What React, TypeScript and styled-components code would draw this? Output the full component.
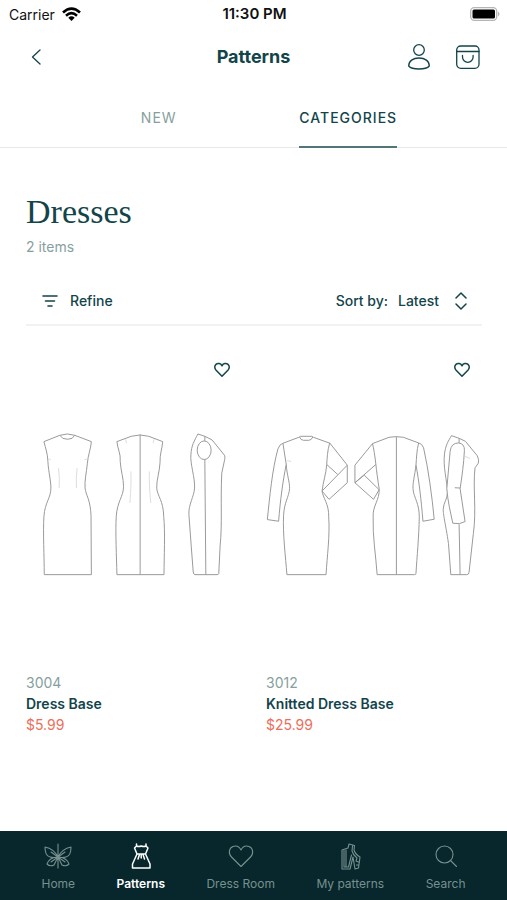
import React from "react";
import styled, { createGlobalStyle, css } from "styled-components";

const ink = "#12444a";
const muted = "#869f9e";
const coral = "#ec6e5b";

const GlobalStyle = createGlobalStyle`
  *, *::before, *::after { box-sizing: border-box; }
  body {
    margin: 0;
    background: #fff;
    color: ${ink};
    font-family: Inter, "Liberation Sans", sans-serif;
    font-size: 14px;
  }
  button, select { font: inherit; color: inherit; }
  a { color: inherit; text-decoration: none; }
  h1, h2, h3, p { margin: 0; }
`;

const Screen = styled.div`
  display: flex;
  flex-direction: column;
  min-height: 100vh;
`;

const ThreeColumns = styled.div`
  display: grid;
  grid-template-columns: 1fr auto 1fr;
  align-items: center;
`;

const StatusBar = styled(ThreeColumns)`
  height: 28px;
  padding: 0 7px 0 9px;
  color: #111;
`;

const Carrier = styled.span`
  display: flex;
  align-items: center;
  gap: 7px;
`;

const Clock = styled.time`
  font-size: 15px;
  line-height: 20px;
  font-weight: 600;
`;

const Header = styled(ThreeColumns)`
  height: 58px;
  padding: 0 26px;
`;

const HeaderTitle = styled.h2`
  font-size: 18px;
  line-height: 24px;
  font-weight: 700;
`;

const Actions = styled.div`
  display: flex;
  justify-self: end;
  gap: 23px;
`;

const IconButton = styled.button`
  display: flex;
  align-items: center;
  justify-content: center;
  justify-self: start;
  min-width: 22px;
  height: 32px;
  padding: 0;
  border: 0;
  background: none;
  cursor: pointer;
`;

const LineIcon = styled.svg<{ $weight?: number }>`
  display: block;
  flex: none;
  fill: none;
  stroke: currentColor;
  stroke-width: ${({ $weight = 1.3 }) => $weight};
  stroke-linecap: round;
  stroke-linejoin: round;
`;

const Tabs = styled.nav`
  display: grid;
  grid-template-columns: 1fr 1fr;
  justify-items: center;
  height: 62px;
  padding: 0 64px;
  border-bottom: 1px solid #e6e9e9;
`;

const Tab = styled.a<{ $active?: boolean }>`
  height: 62px;
  line-height: 63px;
  letter-spacing: 1px;
  color: ${muted};
  ${({ $active }) =>
    $active &&
    css`
      color: ${ink};
      font-weight: 500;
      border-bottom: 2px solid #517579;
    `}
`;

const Content = styled.main`
  flex: 1;
  padding: 44px 25px 40px 26px;
`;

const PageTitle = styled.h1`
  font-family: "Liberation Serif", serif;
  font-size: 34px;
  line-height: 40px;
  font-weight: 400;
`;

const Count = styled.p`
  margin-top: 5px;
  line-height: 20px;
  color: ${muted};
`;

const Toolbar = styled.div`
  display: flex;
  align-items: center;
  justify-content: space-between;
  height: 49px;
  margin-top: 20px;
  padding: 0 14px 0 16px;
  border-bottom: 2px solid #f1f3f3;
  font-weight: 500;
`;

const RefineButton = styled.button`
  display: flex;
  align-items: center;
  gap: 12px;
  padding: 0;
  border: 0;
  background: none;
  cursor: pointer;
`;

const Sort = styled.label`
  display: flex;
  align-items: center;
`;

const SortSelect = styled.select`
  appearance: none;
  margin: 0 14px 0 10px;
  padding: 0;
  border: 0;
  background: none;
`;

const Products = styled.div`
  display: grid;
  grid-template-columns: 1fr 1fr;
  gap: 24px;
  margin-top: 24px;
`;

const Card = styled.article`
  position: relative;
  line-height: 21px;
`;

const Favourite = styled(IconButton)`
  position: absolute;
  top: 4px;
  right: 4px;
  width: 32px;
`;

const Sketch = styled.svg`
  display: block;
  width: 100%;
  margin: 80px 0 93px;
  fill: none;
  stroke: #999;
  stroke-width: 3;
  stroke-linejoin: round;
`;

const Dart = styled.path`
  stroke: #ddd;
`;

const Code = styled.p`
  color: ${muted};
`;

const Name = styled.h3`
  font-size: 14px;
  font-weight: 600;
`;

const Price = styled.p`
  color: ${coral};
`;

const BottomNav = styled.nav`
  position: sticky;
  bottom: 0;
  display: flex;
  justify-content: space-evenly;
  height: 69px;
  padding-top: 12px;
  background: #07272c;
`;

const NavItem = styled.a<{ $active?: boolean }>`
  display: flex;
  flex-direction: column;
  align-items: center;
  gap: 5px;
  font-size: 12px;
  line-height: 16px;
  color: ${({ $active }) => ($active ? "#fff" : "#77908f")};
  font-weight: ${({ $active }) => ($active ? 600 : 400)};
`;

const heart = "M8 14.2 1.9 8C.3 6.3.4 3.8 2 2.4 3.8.9 6.7 1.3 8 3.8 9.3 1.3 12.2.9 14 2.4c1.6 1.4 1.7 3.9.1 5.6Z";

function FittedDress() {
  return (
    <Sketch viewBox="0 0 651 450" role="img" aria-label="Dress Base sketch">
      <g transform="translate(-18 -30)">
        <path d="M72 65 120 46Q143 38 165 46L215 65C213 88 205 105 203 130C200 160 194 185 196 205C198 225 213 242 214 290L215 466H73C73 410 69 340 72 290C75 248 93 235 93 205C93 180 86 160 84 125C83 100 77 85 72 65Z" />
        <path d="M120 46Q126 58 143 58Q160 58 165 46" />
        <Dart d="M116 145Q120 175 118 205M172 145Q168 175 170 205M84 117 93 120M203 117 194 120" />
        <path d="M292 65 335 49Q362 41 388 49L430 65C428 90 421 102 422 128C421 155 411 180 412 205C414 230 432 242 433 290C438 340 434 410 434 466H292C291 410 287 340 290 290C293 245 312 230 312 200C312 175 304 155 302 125C304 100 294 88 292 65ZM362 44V466" />
        <Dart d="M318 58 321 70M404 58 401 70M334 155Q336 190 331 250M390 155Q388 190 394 250" />
      </g>
      <g transform="translate(402 -30)">
        <path d="M116 42 137 49 159 60 196 106Q199 111 197 118L188 160C184 250 190 310 183 380L179 463Q178 466 174 466H107Q103 466 102 458L96 380 89 285C87 255 105 230 106 205C108 175 92 130 95 105C96 77 106 62 116 42Z" />
        <ellipse cx="135" cy="91" rx="21" ry="28" />
        <path d="M137 49V63M137 119 140 466" />
      </g>
    </Sketch>
  );
}

function SleevedDress() {
  return (
    <Sketch viewBox="0 0 651 450" role="img" aria-label="Knitted Dress Base sketch">
      <g transform="translate(-319 -28)">
        <path d="M370 68 418 50 423 47H457L462 50 512 68M420 49Q424 59 432 59H448Q456 59 460 49M370 68Q361 69 355 85C338 145 330 230 323 298L357 303C362 240 370 180 380 132L370 68M380 132C382 165 391 185 390 205C388 230 374 245 372 285C369 340 378 410 382 464H500" />
        <Dart d="M383 120 395 123" />
      </g>
      <g transform="translate(101 -28)">
        <path d="M91 67 144 134V187L89 237 68 212 144 134M91 67C84 90 83 115 82 132C80 160 71 185 68 212C70 232 89 250 88 290C92 345 83 410 80 464M82 132 115 162" />
        <path d="M220 69 270 50Q292 46 313 50L359 67C353 90 353 110 351 134C348 165 339 190 343 212C345 230 361 250 361 290C360 350 354 410 351 460Q351 464 347 464H234C230 405 220 350 222 290C220 255 242 240 240 205C236 180 232 150 230 130C227 105 224 85 220 69ZM292 49V464M220 69 167 134V187L223 237 240 208 195 164 167 187 230 132" />
        <path d="M359 67Q369 68 374 82C389 150 399 225 406 297L372 303C367 240 360 180 351 134" />
        <path d="M458 45 481 53 500 62 536 106Q542 118 539 128L529 142C522 200 534 270 524 340L511 457Q510 464 504 464H456L449 370C440 310 434 290 433 268C434 245 446 237 446 216C445 180 432 140 437 100C440 75 448 62 458 45Z" />
        <path fill="#fff" d="M462 309C455 275 447 245 444 205L454 92Q457 67 479 67Q498 69 497 90C495 130 490 165 484 205L499 304Q483 314 462 309Z" />
        <path d="M481 53V67M481 312 484 464M468 202 484 203" />
        <Dart d="M498 107 514 114" />
      </g>
    </Sketch>
  );
}

const products = [
  { code: "3004", name: "Dress Base", price: "$5.99", drawing: <FittedDress /> },
  { code: "3012", name: "Knitted Dress Base", price: "$25.99", drawing: <SleevedDress /> },
];

const navItems = [
  {
    label: "Home",
    icon: <path d="M14 1V25M14 14C11 8 6 5 1 4Q1 13 6 14Q10 15 14 14Q18 15 22 14Q27 13 27 4C22 5 17 8 14 14M13 14Q5 15 3 21Q6 24 10 22L14 14 18 22Q22 24 25 21Q23 15 15 14M7 9 21 19M21 9 7 19" />,
  },
  {
    label: "Patterns",
    active: true,
    icon: <path d="M9.500 1V3L7.500 5 10 11 5.500 21V25H23V21L18.500 11 21 5 19 3V1M9.500 3Q12 4 14.200 3Q17 4 19 3M10 11H18.500M12.500 11.500 11 16M14.200 12V15M16 11.500 17.500 16" />,
  },
  {
    label: "Dress Room",
    icon: <path d="M14 23.500 4.500 14C1 10.500 2 5 6 3.500C9.500 2.200 12.500 4 14 7C15.500 4 18.500 2.200 22 3.500C26 5 27 10.500 23.500 14Z" />,
  },
  {
    label: "My patterns",
    icon: <path d="M13 1 18.500 2.500 18 7Q19 11 24 14L22.500 25 19 26 17 14 14 26H6V7L12 5ZM8 7.500V24H12.500L15.500 12M10 7V24M16.500 3 16 8Q17 12 21 15L20 18 22.500 19M20.500 22H23" />,
  },
  {
    label: "Search",
    icon: (
      <>
        <circle cx="12.500" cy="11.500" r="8.500" />
        <path d="m18.500 17.500 6 6" />
      </>
    ),
  },
];

export default function App() {
  return (
    <Screen>
      <GlobalStyle />
      <StatusBar>
        <Carrier>
          Carrier
          <svg width="19" height="15" viewBox="0 0 19 15" fill="none" stroke="#000" strokeWidth="2.600" aria-hidden="true">
            <path d="M1 5.500Q9.500-2.300 18 5.500M4 8.700Q9.500 3.700 15 8.700" />
            <path d="M9.500 14 6.300 10.700Q9.500 8 12.700 10.700Z" fill="#000" stroke="none" />
          </svg>
        </Carrier>
        <Clock>11:30 PM</Clock>
        <Actions>
          <svg width="30" height="14" viewBox="0 0 30 14" role="img" aria-label="Battery full">
            <rect x=".7" y=".7" width="26" height="12.600" rx="3.500" fill="#fff" stroke="#b5b5b5" strokeWidth="1.300" />
            <rect x="2.500" y="2.500" width="22.500" height="9" rx="1.500" />
            <path d="M28 4.500Q31 7 28 9.500Z" fill="#b5b5b5" />
          </svg>
        </Actions>
      </StatusBar>

      <Header>
        <IconButton aria-label="Back">
          <LineIcon width="22" height="18" viewBox="0 0 22 18">
            <path d="m14 2-7.500 7 7.500 7" />
          </LineIcon>
        </IconButton>
        <HeaderTitle>Patterns</HeaderTitle>
        <Actions>
          <IconButton aria-label="Account">
            <LineIcon width="26" height="26" viewBox="0 0 26 26">
              <circle cx="13" cy="6" r="5.300" />
              <path d="M2.700 22C2.700 17 7 14 13 14S23.300 17 23.300 22C20 26 6 26 2.700 22Z" />
            </LineIcon>
          </IconButton>
          <IconButton aria-label="Shopping bag">
            <LineIcon width="26" height="26" viewBox="0 0 26 26">
              <rect x="1.700" y="2" width="22.300" height="22.300" rx="4" />
              <path d="M1.700 7.500H24M7.500 11.500V13a5.300 5.300 0 0 0 10.600 0V11.500" />
            </LineIcon>
          </IconButton>
        </Actions>
      </Header>

      <Tabs aria-label="Pattern views">
        <Tab href="#new">NEW</Tab>
        <Tab href="#categories" $active aria-current="page">CATEGORIES</Tab>
      </Tabs>

      <Content>
        <PageTitle>Dresses</PageTitle>
        <Count>2 items</Count>
        <Toolbar>
          <RefineButton>
            <LineIcon $weight={1.6} width="16" height="14" viewBox="0 0 16 14">
              <path d="M1 2H15M3.500 7H12.500M6 12H10" />
            </LineIcon>
            Refine
          </RefineButton>
          <Sort>
            Sort by:
            <SortSelect defaultValue="latest">
              <option value="latest">Latest</option>
            </SortSelect>
            <LineIcon $weight={1.5} width="14" height="18" viewBox="0 0 14 18">
              <path d="m2 6 5-5 5 5M2 12l5 5 5-5" />
            </LineIcon>
          </Sort>
        </Toolbar>
        <Products>
          {products.map(({ code, name, price, drawing }) => (
            <Card key={code}>
              <Favourite aria-label={`Save ${name}`}>
                <LineIcon $weight={1.5} width="18" height="16" viewBox="-1 0 18 16">
                  <path d={heart} />
                </LineIcon>
              </Favourite>
              {drawing}
              <Code>{code}</Code>
              <Name>{name}</Name>
              <Price>{price}</Price>
            </Card>
          ))}
        </Products>
      </Content>

      <BottomNav aria-label="Main">
        {navItems.map(({ label, icon, active }) => (
          <NavItem key={label} href="#" $active={active}>
            <LineIcon $weight={active ? 1.5 : 1.1} width="28" height="28" viewBox="0 0 28 28">
              {icon}
            </LineIcon>
            {label}
          </NavItem>
        ))}
      </BottomNav>
    </Screen>
  );
}
